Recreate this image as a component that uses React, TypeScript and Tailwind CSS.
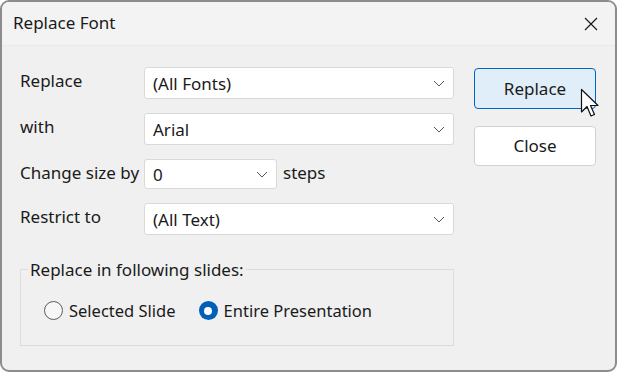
import React from "react";

const Chevron: React.FC = () => (
  <svg width="12" height="7" viewBox="0 0 12 7" className="shrink-0">
    <path d="M1 1 L6 6 L11 1" fill="none" stroke="#555" strokeWidth="1" />
  </svg>
);

const Dropdown: React.FC<{ value: string; className?: string }> = ({ value, className }) => (
  <div
    className={
      "flex items-center justify-between bg-white border border-[#d9d9d9] rounded-[3px] pl-[8px] pr-[8px] " +
      (className ?? "")
    }
  >
    <span className="text-[17px] text-[#1a1a1a] pt-[2px]">{value}</span>
    <Chevron />
  </div>
);

const Radio: React.FC<{ checked?: boolean; label: string }> = ({ checked, label }) => (
  <label className="flex items-center gap-[6px]">
    {checked ? (
      <span className="w-[19px] h-[19px] rounded-full bg-[#005fb8] flex items-center justify-center">
        <span className="w-[8px] h-[8px] rounded-full bg-white" />
      </span>
    ) : (
      <span className="w-[19px] h-[19px] rounded-full border border-[#5c5c5c] bg-[#f7f7f7]" />
    )}
    <span className="text-[16.5px] text-[#1a1a1a]">{label}</span>
  </label>
);

export default function App() {
  return (
    <div
      className="w-[618px] h-[373px] bg-white"
      style={{ fontFamily: '"Noto Sans", "Open Sans", sans-serif' }}
    >
      <div className="w-[617px] h-[372px] border-2 border-[#8c8c8c] rounded-[9px] overflow-hidden flex flex-col bg-[#f0f0f0] relative">
        <div className="h-[44px] bg-[#f3f3f3] border-b border-[#e9e9e9] flex items-center justify-between pl-[11px] pr-[17px] shrink-0">
          <span className="text-[17px] text-[#1a1a1a] pb-[1px]">Replace Font</span>
          <svg width="14" height="14" viewBox="0 0 14 14">
            <path d="M1 1 L13 13 M13 1 L1 13" stroke="#1a1a1a" strokeWidth="1.2" />
          </svg>
        </div>
        <div className="flex flex-1 pl-[18px] pt-[21px]">
          <div className="flex flex-col w-[434px]">
            <div className="flex flex-col gap-[14px]">
              <div className="flex items-start h-[32px]">
                <span className="w-[124px] text-[17px] text-[#1a1a1a] leading-[28px]">Replace</span>
                <Dropdown value="(All Fonts)" className="w-[310px] h-[32px]" />
              </div>
              <div className="flex items-start h-[32px]">
                <span className="w-[124px] text-[17px] text-[#1a1a1a] leading-[28px]">with</span>
                <Dropdown value="Arial" className="w-[310px] h-[32px]" />
              </div>
              <div className="flex items-start h-[30px]">
                <span className="w-[124px] text-[17px] text-[#1a1a1a] leading-[28px] whitespace-nowrap">
                  Change size by
                </span>
                <Dropdown value="0" className="w-[133px] h-[30px]" />
                <span className="ml-[6px] text-[17px] text-[#1a1a1a] leading-[28px]">steps</span>
              </div>
              <div className="flex items-start h-[32px]">
                <span className="w-[124px] text-[17px] text-[#1a1a1a] leading-[28px]">Restrict to</span>
                <Dropdown value="(All Text)" className="w-[310px] h-[32px]" />
              </div>
            </div>
            <fieldset className="mt-[22px] w-[434px] h-[89px] border border-[#dcdcdc] px-[23px]">
              <legend className="ml-[-16px] px-[2px] text-[17px] text-[#1a1a1a]">
                Replace in following slides:
              </legend>
              <div className="flex items-center gap-[23px] mt-[16px]">
                <Radio label="Selected Slide" />
                <Radio checked label="Entire Presentation" />
              </div>
            </fieldset>
          </div>
          <div className="flex flex-col ml-[20px] pt-[1px] gap-[17px]">
            <button className="w-[122px] h-[41px] bg-[#e0eef9] border border-[#0067c0] rounded-[4px] text-[17px] text-[#1a1a1a]">
              Replace
            </button>
            <button className="w-[122px] h-[40px] bg-white border border-[#d1d1d1] rounded-[4px] text-[17px] text-[#1a1a1a]">
              Close
            </button>
          </div>
        </div>
        <svg
          className="absolute left-[578px] top-[86px]"
          width="22"
          height="34"
          viewBox="0 0 22 34"
        >
          <path
            d="M1.5 1.5 L1.5 24 L7 18.5 L11 28 L14.5 26.5 L10.5 17.5 L18 17.5 Z"
            fill="white"
            stroke="#111"
            strokeWidth="1.2"
            strokeLinejoin="round"
          />
        </svg>
      </div>
    </div>
  );
}
